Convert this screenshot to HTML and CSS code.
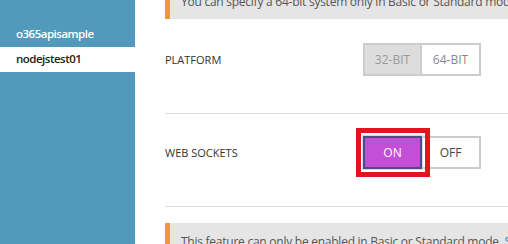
FILE: index.html
```html
<!DOCTYPE html>
<html lang="en">

<head>
    <meta charset="UTF-8">
    <meta name="viewport" content="width=device-width, initial-scale=1.0">
    <title>Configure</title>
    <link rel="stylesheet" href="styles.css">
</head>

<body>

    <div class="page">
        <div class="sidebar">
            <div class="site">o365apisample</div>
            <div class="site site-selected">nodejstest01</div>
        </div>

        <div class="main">
            <div class="notice notice-top">You can specify a 64-bit system only in Basic or Standard mode. See pricing details.</div>

            <div class="row">
                <div class="label">PLATFORM</div>
                <div class="toggle">
                    <button class="toggle-button toggle-disabled">32-BIT</button>
                    <button class="toggle-button">64-BIT</button>
                </div>
            </div>

            <div class="row">
                <div class="label">WEB SOCKETS</div>
                <div class="toggle">
                    <span class="highlight">
                        <button class="toggle-button toggle-on">ON</button>
                    </span>
                    <button class="toggle-button toggle-off">OFF</button>
                </div>
            </div>

            <div class="notice">This feature can only be enabled in Basic or Standard mode. <a href="#">See pricing details.</a></div>
        </div>
    </div>

</body>

</html>
```

FILE: styles.css
```css
body {
    margin: 0;
    font-family: "Open Sans", "Noto Sans", sans-serif;
    background-color: #fff;
    overflow: hidden;
}

.page {
    display: flex;
    height: 244px;
}

.sidebar {
    width: 135px;
    flex-shrink: 0;
    background-color: #519abb;
    padding-top: 22px;
}

.site {
    height: 25px;
    line-height: 24px;
    padding-left: 16px;
    font-size: 11.5px;
    font-weight: 600;
    letter-spacing: -0.5px;
    color: #fff;
}

.site-selected {
    background-color: #fff;
    color: #222;
}

.main {
    flex: 1;
    padding-left: 30px;
    min-width: 0;
}

.notice {
    width: 600px;
    background-color: #e5e5e6;
    border-left: 5px solid #e89a3c;
    padding: 10px 11px 8px;
    font-size: 12px;
    letter-spacing: -0.25px;
    line-height: 18px;
    color: #555;
    white-space: nowrap;
    margin-top: 16px;
}

.notice a {
    color: #2a8ac8;
    text-decoration: none;
}

.notice-top {
    margin-top: -17px;
}

.row {
    display: grid;
    grid-template-columns: 198px auto;
    align-items: center;
    width: 600px;
    padding: 24px 0 37px;
    border-bottom: 1px solid #dddddd;
}

.row + .row {
    padding-top: 22px;
}

.label {
    font-size: 11px;
    color: #333;
}

.toggle {
    display: flex;
}

.toggle-button {
    width: 59px;
    height: 33px;
    border: 2px solid #cccccc;
    background-color: #fff;
    font-family: "Open Sans", "Noto Sans", sans-serif;
    font-size: 12px;
    color: #888;
    padding: 0;
}

.toggle-button + .toggle-button {
    border-left: none;
}

.toggle-disabled {
    background-color: #dddddd;
    color: #999;
}

.highlight {
    position: relative;
    display: flex;
}

.highlight::after {
    content: "";
    position: absolute;
    top: -8px;
    left: -7px;
    right: -8px;
    bottom: -8px;
    border: 5px solid #e3141d;
}

.toggle-on {
    background-color: #c34fd7;
    border-color: #4b4e82;
    color: #fff;
    box-shadow: 0 0 0 1px #d6d6e4;
}

.toggle-off {
    border-left: none;
    color: #444;
}
```
